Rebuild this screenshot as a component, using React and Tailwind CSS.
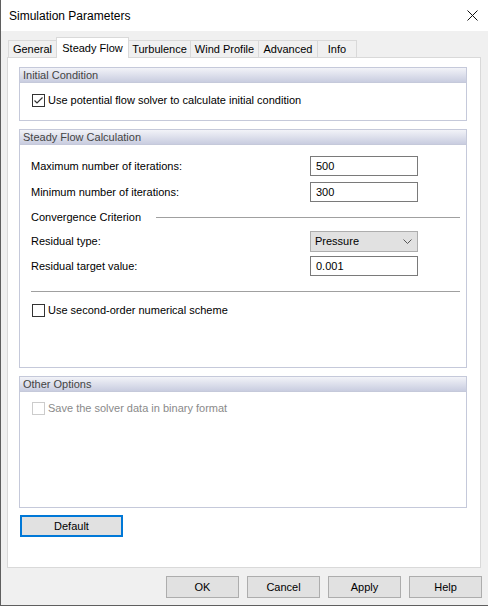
import React from "react";

const font = { fontFamily: '"Liberation Sans", Arial, sans-serif' };

function CheckBox({ checked, disabled }) {
  return (
    <svg width="13" height="13" viewBox="0 0 13 13" className="shrink-0">
      <rect
        x="0.5"
        y="0.5"
        width="12"
        height="12"
        fill="#fff"
        stroke={disabled ? "#cccccc" : "#333333"}
      />
      {checked && (
        <polyline
          points="2.5,6.5 5,9 10.5,3.5"
          fill="none"
          stroke="#333333"
          strokeWidth="1.2"
        />
      )}
    </svg>
  );
}

function Group({ title, className, children }) {
  return (
    <div className={`flex flex-col border border-[#c5c9da] bg-white ${className}`}>
      <div className="h-[15px] shrink-0 border-b border-[#c5c9da] bg-gradient-to-b from-[#f2f3f8] to-[#c9cde0] pl-[3px] text-[11px] leading-[14px] text-[#444]">
        {title}
      </div>
      {children}
    </div>
  );
}

function Field({ label, value }) {
  return (
    <div className="flex h-[20px] items-center pr-[42px]">
      <span className="flex-1">{label}</span>
      <div className="flex h-[20px] w-[108px] items-center border border-[#7a7a7a] bg-white pl-[5px]">
        {value}
      </div>
    </div>
  );
}

const tabs = [
  { name: "General", w: "w-[49px]" },
  { name: "Steady Flow", w: "w-[73px]", active: true },
  { name: "Turbulence", w: "w-[63px]" },
  { name: "Wind Profile", w: "w-[69px]" },
  { name: "Advanced", w: "w-[60px]" },
  { name: "Info", w: "w-[40px]" },
];

export default function App() {
  return (
    <div
      className="flex h-[606px] w-[488px] flex-col border-b border-l border-[#5f5f5f] bg-[#f0f0f0] text-[11px] text-black"
      style={font}
    >
      {/* title bar */}
      <div className="flex h-[31px] shrink-0 items-center justify-between bg-white pl-[8px] pr-[10px]">
        <span className="text-[12px]">Simulation Parameters</span>
        <svg width="11" height="11" viewBox="0 0 11 11">
          <path d="M0.5 0.5L10.5 10.5M10.5 0.5L0.5 10.5" stroke="#111" strokeWidth="1" />
        </svg>
      </div>

      <div className="flex flex-1 flex-col pl-[6px] pt-[6px]">
        {/* tab strip */}
        <div className="ml-[1px] flex h-[20px] items-end">
          {tabs.map((t, i) =>
            t.active ? (
              <div
                key={t.name}
                className={`relative z-10 -mb-px -ml-px flex h-[21px] ${t.w} items-start justify-center border border-b-0 border-[#d9d9d9] bg-white pt-[2px]`}
              >
                {t.name}
              </div>
            ) : (
              <div
                key={t.name}
                className={`flex h-[17px] ${t.w} items-center justify-center border-t border-r border-[#d9d9d9] ${
                  i === 0 ? "border-l" : "-ml-px border-l"
                } bg-[#f0f0f0]`}
              >
                {t.name}
              </div>
            )
          )}
        </div>

        {/* tab page */}
        <div className="flex h-[511px] w-[474px] flex-col border border-[#d9d9d9] bg-white pl-[11px] pr-[13px] pt-[9px]">
          <Group title="Initial Condition" className="h-[54px]">
            <div className="flex items-center gap-[3px] pl-[12px] pt-[9px]">
              <CheckBox checked />
              <span>Use potential flow solver to calculate initial condition</span>
            </div>
          </Group>

          <Group title="Steady Flow Calculation" className="mt-[8px] h-[239px]">
            <div className="flex flex-col pl-[11px] pr-[6px] pt-[11px]">
              <Field label="Maximum number of iterations:" value="500" />
              <div className="h-[6px]" />
              <Field label="Minimum number of iterations:" value="300" />
              <div className="mt-[5px] flex h-[20px] items-center">
                <span>Convergence Criterion</span>
                <div className="ml-[15px] h-px flex-1 bg-[#a0a0a0]" />
              </div>
              <div className="mt-[4px] flex h-[21px] items-center pr-[42px]">
                <span className="flex-1">Residual type:</span>
                <div className="flex h-[21px] w-[108px] items-center justify-between border border-[#adadad] bg-[#e1e1e1] pl-[4px] pr-[5px]">
                  <span>Pressure</span>
                  <svg width="9" height="5" viewBox="0 0 9 5">
                    <polyline points="0.5,0.5 4.5,4.5 8.5,0.5" fill="none" stroke="#555" />
                  </svg>
                </div>
              </div>
              <div className="h-[4px]" />
              <Field label="Residual target value:" value="0.001" />
              <div className="mt-[15px] h-px bg-[#a0a0a0]" />
              <div className="mt-[10px] flex items-center gap-[3px] pl-[1px]">
                <CheckBox />
                <span>Use second-order numerical scheme</span>
              </div>
            </div>
          </Group>

          <Group title="Other Options" className="mt-[8px] h-[132px]">
            <div className="flex items-center gap-[3px] pl-[12px] pt-[8px] text-[#8a8a8a]">
              <CheckBox disabled />
              <span>Save the solver data in binary format</span>
            </div>
          </Group>

          <button className="ml-[1px] mt-[7px] flex h-[22px] w-[103px] items-center justify-center border-2 border-[#0078d7] bg-[#e1e1e1] text-[11px]">
            Default
          </button>
        </div>

        {/* dialog buttons */}
        <div className="mt-[8px] flex justify-end gap-[8px] pr-[6px]">
          {["OK", "Cancel", "Apply", "Help"].map((b) => (
            <button
              key={b}
              className="flex h-[22px] w-[73px] items-center justify-center border border-[#adadad] bg-[#e1e1e1] text-[11px]"
            >
              {b}
            </button>
          ))}
        </div>
      </div>
    </div>
  );
}
